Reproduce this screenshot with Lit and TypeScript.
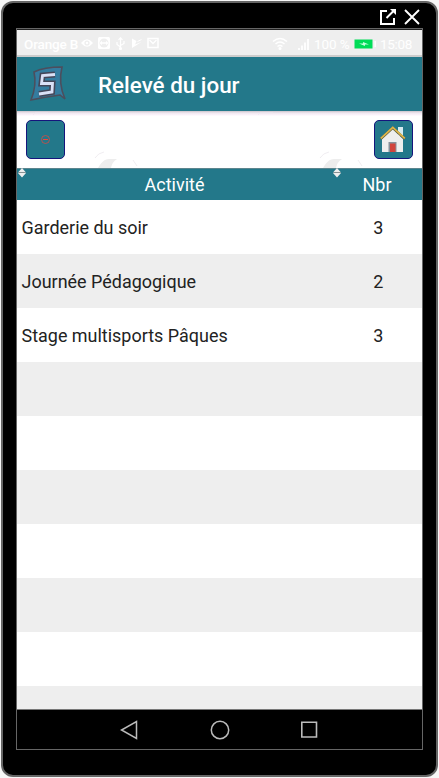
import { LitElement, html, css, svg } from "lit";
import { customElement } from "lit/decorators.js";

interface Activity {
  name: string;
  count: number | "";
}

const activities: Activity[] = [
  { name: "Garderie du soir", count: 3 },
  { name: "Journée Pédagogique", count: 2 },
  { name: "Stage multisports Pâques", count: 3 },
  ...Array.from({ length: 7 }, () => ({ name: "", count: "" as const })),
];

const sortMark = html`<svg class="sort" width="10" height="10" viewBox="0 0 10 10">
  <path d="M5 0 9 4.500H1zM5 9.500 9 5H1z" fill="#eee" />
  <path d="M1.500 4.500h7" stroke="#888" stroke-width=".8" />
</svg>`;

const watermark = (x: number) => svg`<g transform="translate(${x} 0)">
  <path d="M0 57C3 52 6 48 11 48H19Q14 51 13 57z" fill="#ededed" />
  <path d="M-3 47Q0 42 6 41M35 49l4 6" fill="none" stroke="#ece8ee" stroke-width=".8" />
  <path d="M-65 4l2-2h13" fill="none" stroke="#f0e9f1" stroke-width=".8" />
</g>`;

@customElement("app-root")
export class AppRoot extends LitElement {
  static styles = css`
    :host {
      display: block;
      box-sizing: border-box;
      width: 439px;
      height: 778px;
      padding: 1px;
      background: #f7f7f7;
      font-family: Roboto, "Liberation Sans", sans-serif;
      overflow: hidden;
    }
    * {
      box-sizing: border-box;
    }
    svg {
      display: block;
      flex: none;
    }
    .device {
      width: 437px;
      height: 776px;
      background: #000;
      border: 2px solid #666;
      border-radius: 12px;
      padding: 0 13px;
    }
    .window {
      height: 25px;
      display: flex;
      justify-content: flex-end;
      gap: 8px;
      padding: 6px 3px 0 0;
    }
    .screen {
      width: 407px;
      height: 722px;
      border: 1px solid #666;
      display: flex;
      flex-direction: column;
      background: #fff;
    }
    .status {
      height: 28px;
      flex: none;
      display: flex;
      align-items: center;
      background: #eee;
      border-top: 1px solid #222;
      border-bottom: 2px solid #ccc;
      color: #fff;
      font-size: 13.5px;
      padding: 2px 9px 0 7px;
      white-space: nowrap;
    }
    .carrier {
      width: 56px;
      letter-spacing: -0.15px;
      font-weight: 500;
    }
    .icons {
      display: flex;
      gap: 5px;
      margin-left: 1px;
    }
    .space {
      flex: 1;
    }
    .signal {
      margin-left: 10px;
    }
    .pct {
      margin: 0 5px;
      width: 35px;
      letter-spacing: -0.1px;
    }
    .clock {
      margin-left: 4px;
      width: 33px;
      letter-spacing: -0.3px;
    }
    .title {
      height: 54px;
      flex: none;
      background: #23788a;
      color: #fff;
      display: flex;
      align-items: center;
      padding-left: 12px;
      font-size: 22.4px;
      font-weight: 500;
      gap: 29px;
    }
    .title span {
      padding-top: 1px;
    }
    .tools {
      height: 57px;
      flex: none;
      display: flex;
      justify-content: space-between;
      padding: 9px 9px 0;
      position: relative;
      background: linear-gradient(#c9c3ca 0, #f0e8f0 2px, #fbf3fb 4px, #fff 5px);
    }
    .marks {
      position: absolute;
      left: 0;
      top: 0;
    }
    .btn {
      width: 39px;
      height: 39px;
      background: #23788a;
      border: 1px solid #15157c;
      border-radius: 5px;
      display: grid;
      place-items: center;
      position: relative;
    }
    .head,
    .row {
      display: grid;
      grid-template-columns: 315px 1fr;
      align-items: center;
      flex: none;
      font-size: 17.97px;
    }
    .head {
      height: 32px;
      background: #23788a;
      color: #fff;
      border-top: 1px solid #5c858e;
      text-align: center;
    }
    .cell {
      position: relative;
      padding-bottom: 1px;
    }
    .sort {
      position: absolute;
      left: 0;
      top: -6px;
    }
    .rows {
      flex: 1;
      min-height: 0;
      overflow: hidden;
    }
    .row {
      height: 54px;
      color: #222;
      padding-left: 4.5px;
      padding-top: 1px;
      grid-template-columns: 312px 1fr;
    }
    .row:nth-child(even) {
      background: #eee;
    }
    .count {
      text-align: center;
    }
    .row .count {
      padding-left: 1px;
    }
    .nav {
      height: 40px;
      flex: none;
      display: flex;
      align-items: center;
      justify-content: center;
      gap: 70.5px;
      padding-right: 2px;
      background: #000;
      border-top: 1px solid #777;
    }
  `;

  render() {
    return html`
      <div class="device">
        <div class="window">
          <svg width="17" height="17" viewBox="0 0 17 17" fill="none" stroke="#fff" stroke-width="2">
            <path d="M8 2H2v13h13V9M7.500 9l7-7" />
            <path d="M11 0h6v6z" fill="#fff" stroke="none" />
          </svg>
          <svg width="16" height="17" viewBox="0 0 16 17" stroke="#fff" stroke-width="1.900">
            <path d="M1 1l14 14M15 1L1 15" />
          </svg>
        </div>
        <div class="screen">
          <div class="status">
            <span class="carrier">Orange B</span>
            <div class="icons">
              <svg width="12" height="12" viewBox="0 0 13 12">
                <path d="M0 6Q6.500-2 13 6Q6.500 14 0 6z" fill="#fff" />
                <circle cx="6.500" cy="6" r="2.800" fill="#eee" />
                <circle cx="6.500" cy="6" r="1.400" fill="#fff" />
              </svg>
              <svg width="12" height="12" viewBox="0 0 12 12">
                <rect width="12" height="12" rx="1.500" fill="#fff" />
                <circle cx="6" cy="6" r="4.500" fill="#eee" />
                <path d="M1.500 6 4 3.800v1.500h4V3.800L10.500 6 8 8.200V6.700H4v1.500z" fill="#fff" />
              </svg>
              <svg width="11" height="13" viewBox="0 0 11 13" fill="none" stroke="#fff" stroke-width="1.200">
                <path d="M5.500 12V1M3.500 2.800l2-2 2 2M5.500 10 2 7.500V5M5.500 8.500 9 6.500V4" />
                <circle cx="5.500" cy="11.500" r="1" fill="#fff" />
              </svg>
              <svg width="11" height="12" viewBox="0 0 11 12">
                <path d="M1 1.500 5.500 4 4 7.500 10.500 5 1 11z" fill="#fff" />
                <path d="M6.500 4.500 10.500 2.500" stroke="#fff" />
              </svg>
              <svg width="12" height="12" viewBox="0 0 12 12" fill="none" stroke="#fff">
                <path d="M1 1.500h10v9H1z" stroke-width="1.500" />
                <path d="M2.500 3 6 6.500 9.500 3" stroke-width="1.300" />
              </svg>
            </div>
            <div class="space"></div>
            <svg width="16" height="13" viewBox="0 0 16 13" fill="none" stroke="#fff" stroke-width="1.500">
              <path d="M1 4.500q7-6 14 0M3.500 7q4.500-4 9 0M5.500 9.500q2.500-2 5 0" />
              <circle cx="8" cy="11.500" r=".8" fill="#fff" />
            </svg>
            <svg class="signal" width="11" height="12" viewBox="0 0 11 12" fill="none" stroke="#fff" stroke-width="1.700">
              <path d="M1 12v-2M4 12V7.500M7 12V4.500M10 12V1" />
            </svg>
            <span class="pct">100 %</span>
            <svg width="22" height="10" viewBox="0 0 22 10">
              <rect x=".5" y=".5" width="18" height="9" fill="#00dc57" />
              <path d="M20.500 2h1.500v6h-1.500z" fill="#fff" />
              <path d="M5 4.500h4V3l6 2.500h-4V7z" fill="#c4ffdc" />
            </svg>
            <span class="clock">15:08</span>
          </div>
          <div class="title">
            <svg width="40" height="38" viewBox="0 0 40 38">
              <path d="M5 7Q15 2 33 2Q29 18 36 34L31 30Q16 32 2 35Q8 20 5 7z" fill="#347c9f" stroke="#4c4e5d" stroke-width="1.600" />
              <path d="M26 9.500 13.500 10.500 12.500 18.500H23.500L23 27 10 29" fill="none" stroke="#444659" stroke-width="6" />
              <path d="M26 9.500 13.500 10.500 12.500 18.500H23.500L23 27 10 29" fill="none" stroke="#d9e0f6" stroke-width="2.800" />
            </svg>
            <span>Relevé du jour</span>
          </div>
          <div class="tools">
            <svg class="marks" width="405" height="57">${watermark(81)}${watermark(306)}</svg>
            <div class="btn">
              <svg width="9" height="9" viewBox="0 0 9 9" fill="none">
                <circle cx="4.500" cy="4.500" r="4" stroke="#d84a42" stroke-width=".8" />
                <path d="M2 4.500h5" stroke="#f0443a" />
              </svg>
            </div>
            <div class="btn">
              <svg width="27" height="27" viewBox="0 0 27 27">
                <path d="M18 1h5v9h-5z" fill="#d5eaf0" />
                <path d="M2 13 12.500 3 23 13v13H2z" fill="#eee" />
                <path d="M8.500 16h8v10h-8z" fill="#87909a" />
                <path d="M10 17.500h5.500V26H10z" fill="#d2443c" />
                <path d="M.8 12.800 12.800 1.800 24.800 12.800" fill="none" stroke="#6d6a45" stroke-width="2.400" />
                <path d="M.8 12.300 12.800 1.300 24.800 12.300" fill="none" stroke="#e0b548" stroke-width="1.600" />
              </svg>
            </div>
          </div>
          <div class="head">
            <div class="cell">${sortMark}Activité</div>
            <div class="cell count">${sortMark}Nbr</div>
          </div>
          <div class="rows">
            ${activities.map(
              (a) => html`<div class="row"><span>${a.name}</span><span class="count">${a.count}</span></div>`
            )}
          </div>
          <div class="nav">
            <svg width="20" height="20" viewBox="0 0 20 20" fill="none" stroke="#bbb" stroke-width="1.500">
              <path d="M17.500 1.500v17L2.500 10z" />
            </svg>
            <svg width="20" height="20" viewBox="0 0 20 20" fill="none" stroke="#bbb" stroke-width="1.500">
              <circle cx="10" cy="10" r="8.700" />
            </svg>
            <svg width="18" height="20" viewBox="0 0 18 20" fill="none" stroke="#bbb" stroke-width="1.600">
              <path d="M1.800 2.300h14.700v14.700H1.800z" />
            </svg>
          </div>
        </div>
      </div>
    `;
  }
}
